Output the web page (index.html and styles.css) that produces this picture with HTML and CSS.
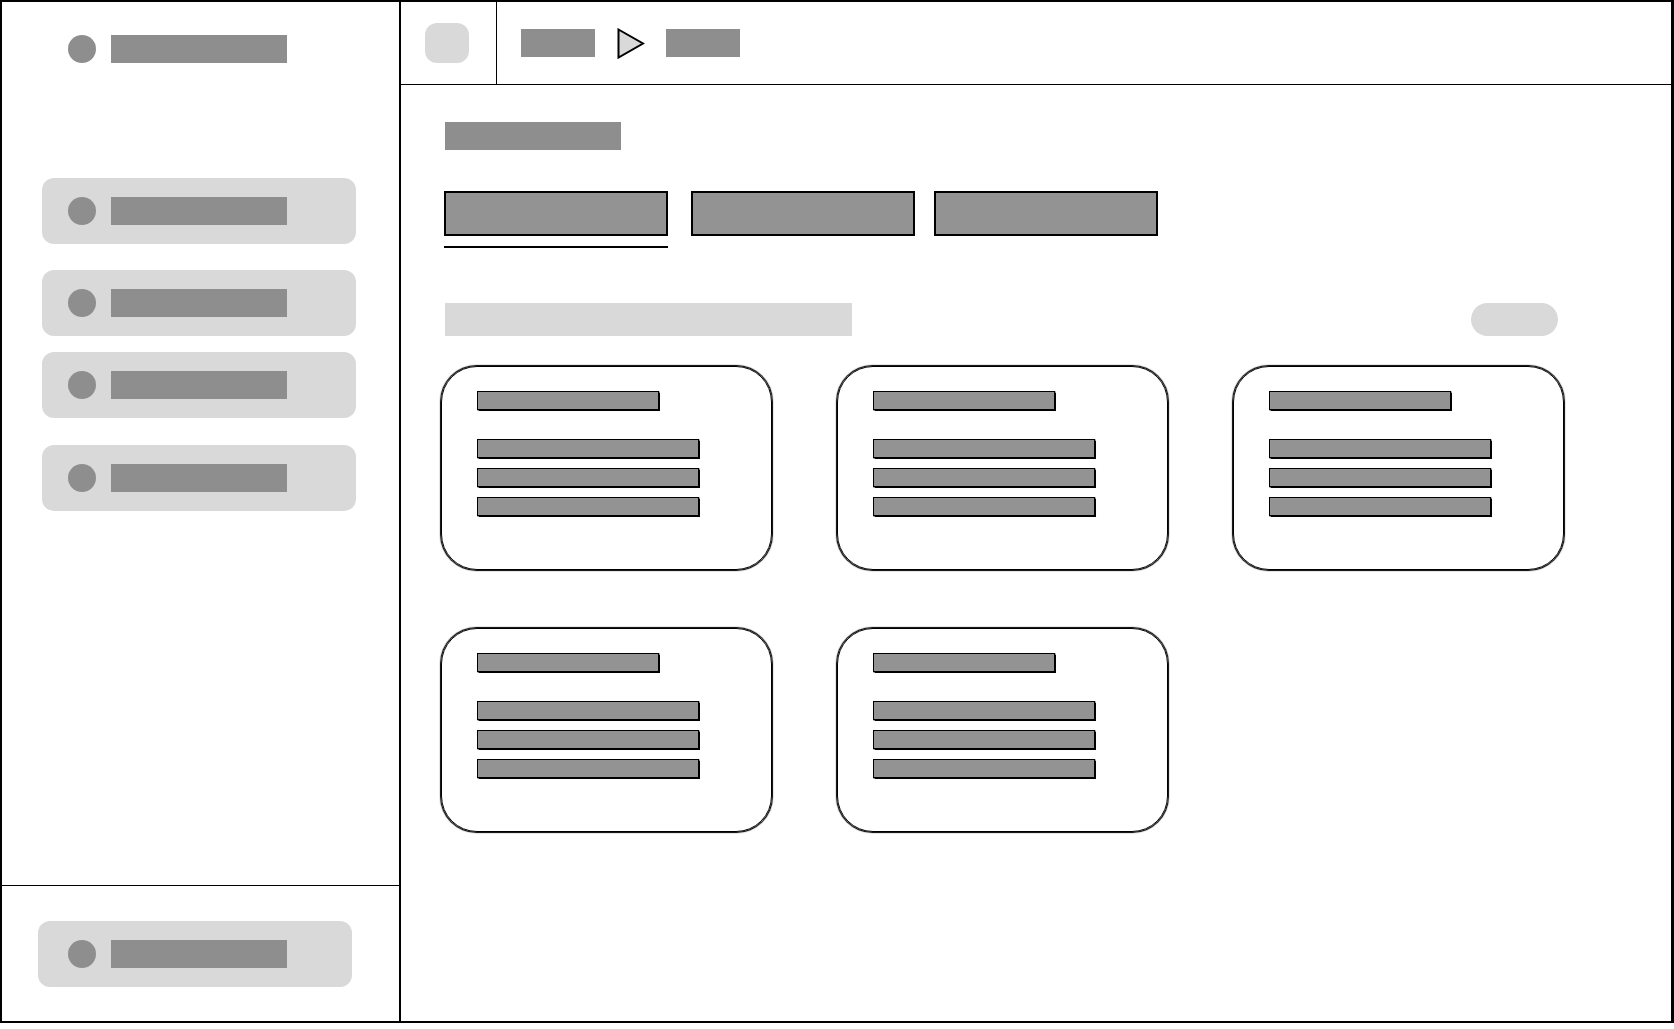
FILE: index.html
```html
<!DOCTYPE html>
<html lang="en">
<head>
<meta charset="utf-8">
<title>Wireframe</title>
<link rel="stylesheet" href="styles.css">
</head>
<body>
<div class="app">
  <aside class="sidebar">
    <div class="sidebar-top">
      <div class="brand">
        <span class="dot"></span>
        <span class="label"></span>
      </div>
      <nav class="nav">
        <div class="nav-item"><span class="dot"></span><span class="label"></span></div>
        <div class="nav-item"><span class="dot"></span><span class="label"></span></div>
        <div class="nav-item tight"><span class="dot"></span><span class="label"></span></div>
        <div class="nav-item loose"><span class="dot"></span><span class="label"></span></div>
      </nav>
    </div>
    <div class="sidebar-bottom">
      <div class="nav-item bottom"><span class="dot"></span><span class="label"></span></div>
    </div>
  </aside>
  <main class="main">
    <header class="topbar">
      <div class="topbar-left">
        <span class="menu-btn"></span>
      </div>
      <div class="crumbs">
        <span class="crumb"></span>
        <svg class="crumb-sep" width="28" height="31" viewBox="0 0 28 31">
          <polygon points="1.5,1.5 26,15.5 1.5,29.5" fill="#d9d9d9" stroke="#000" stroke-width="2" stroke-linejoin="miter"/>
        </svg>
        <span class="crumb"></span>
      </div>
    </header>
    <section class="content">
      <div class="page-title"></div>
      <div class="tabs">
        <div class="tab-item active"><div class="tab-box"></div><div class="tab-line"></div></div>
        <div class="tab-item second"><div class="tab-box"></div><div class="tab-line"></div></div>
        <div class="tab-item third"><div class="tab-box"></div><div class="tab-line"></div></div>
      </div>
      <div class="toolbar">
        <div class="search"></div>
        <div class="pill"></div>
      </div>
      <div class="cards">
        <div class="card"><div class="card-title"></div><div class="card-lines"><div class="line"></div><div class="line"></div><div class="line"></div></div></div>
        <div class="card"><div class="card-title"></div><div class="card-lines"><div class="line"></div><div class="line"></div><div class="line"></div></div></div>
        <div class="card"><div class="card-title"></div><div class="card-lines"><div class="line"></div><div class="line"></div><div class="line"></div></div></div>
        <div class="card"><div class="card-title"></div><div class="card-lines"><div class="line"></div><div class="line"></div><div class="line"></div></div></div>
        <div class="card"><div class="card-title"></div><div class="card-lines"><div class="line"></div><div class="line"></div><div class="line"></div></div></div>
      </div>
    </section>
  </main>
</div>
</body>
</html>
```
FILE: styles.css
```css
* {
  box-sizing: border-box;
}

html, body {
  margin: 0;
  padding: 0;
  background: #ffffff;
  font-family: "Liberation Sans", Arial, sans-serif;
  overflow: hidden;
}

.app {
  display: flex;
  width: 1674px;
  height: 1023px;
  border: 2px solid #000;
  border-right-width: 3px;
}

/* Sidebar */
.sidebar {
  flex: 0 0 399px;
  width: 399px;
  height: 1027px;
  border-right: 2px solid #000;
  display: flex;
  flex-direction: column;
}

.sidebar-top {
  flex: 1;
  padding-top: 33px;
}

.brand {
  display: flex;
  align-items: center;
  gap: 15px;
  padding-left: 66px;
  height: 28px;
}

.dot {
  width: 28px;
  height: 28px;
  border-radius: 50%;
  background: #8e8e8e;
  flex-shrink: 0;
}

.label {
  width: 176px;
  height: 28px;
  background: #8e8e8e;
  flex-shrink: 0;
}

.nav {
  margin-top: 115px;
  display: flex;
  flex-direction: column;
}

.nav-item {
  display: flex;
  align-items: center;
  gap: 15px;
  width: 314px;
  height: 66px;
  margin-left: 40px;
  padding-left: 26px;
  background: #d9d9d9;
  border-radius: 12px;
}

.nav-item + .nav-item {
  margin-top: 26px;
}

.nav-item.tight {
  margin-top: 16px;
}

.nav-item.loose {
  margin-top: 27px;
}

.sidebar-bottom {
  flex: 0 0 144px;
  border-top: 1px solid #000;
  padding-top: 35px;
}

.nav-item.bottom {
  margin-left: 36px;
  padding-left: 30px;
}

/* Main */
.main {
  flex: 1;
  display: flex;
  flex-direction: column;
  min-width: 0;
}

.topbar {
  height: 83px;
  border-bottom: 1px solid #000;
  display: flex;
  align-items: stretch;
}

.topbar-left {
  width: 96px;
  border-right: 1px solid #000;
  display: flex;
  align-items: center;
  padding-left: 24px;
}

.menu-btn {
  width: 44px;
  height: 40px;
  border-radius: 12px;
  background: #d9d9d9;
}

.crumbs {
  display: flex;
  align-items: center;
  padding-left: 24px;
}

.crumb {
  width: 74px;
  height: 28px;
  background: #8e8e8e;
}

.crumb-sep {
  display: block;
  margin: 0 21px 0 22px;
}

.content {
  flex: 1;
  padding: 37px 0 0 40px;
}

.page-title {
  width: 176px;
  height: 28px;
  margin-left: 4px;
  background: #8e8e8e;
}

.tabs {
  display: flex;
  align-items: flex-start;
  margin-top: 41px;
  margin-left: 3px;
}

.tab-item {
  display: flex;
  flex-direction: column;
  gap: 10px;
}

.tab-item.second {
  margin-left: 23px;
}

.tab-item.third {
  margin-left: 19px;
}

.tab-box {
  width: 224px;
  height: 45px;
  border: 2px solid #000;
  background: #939393;
}

.tab-line {
  height: 2px;
  background: transparent;
}

.tab-item.active .tab-line {
  background: #000;
}

.toolbar {
  display: flex;
  justify-content: space-between;
  align-items: center;
  width: 1113px;
  margin-top: 55px;
  margin-left: 4px;
}

.search {
  width: 407px;
  height: 33px;
  background: #d9d9d9;
}

.pill {
  width: 87px;
  height: 33px;
  border-radius: 17px;
  background: #d9d9d9;
}

.cards {
  display: grid;
  grid-template-columns: repeat(3, 331px);
  column-gap: 65px;
  row-gap: 58px;
  margin-top: 30px;
}

.card {
  height: 204px;
  border: 1px solid #000;
  border-radius: 36px;
  box-shadow: 0 0 1px 0.5px #000;
  padding: 24px 0 0 35px;
}

.card-title {
  width: 182px;
  height: 19px;
  border: 1px solid #000;
  box-shadow: 0 0 1px 0.5px #000;
  background: #939393;
}

.card-lines {
  margin-top: 29px;
  display: flex;
  flex-direction: column;
  gap: 10px;
}

.line {
  width: 222px;
  height: 19px;
  border: 1px solid #000;
  box-shadow: 0 0 1px 0.5px #000;
  background: #939393;
}
```
